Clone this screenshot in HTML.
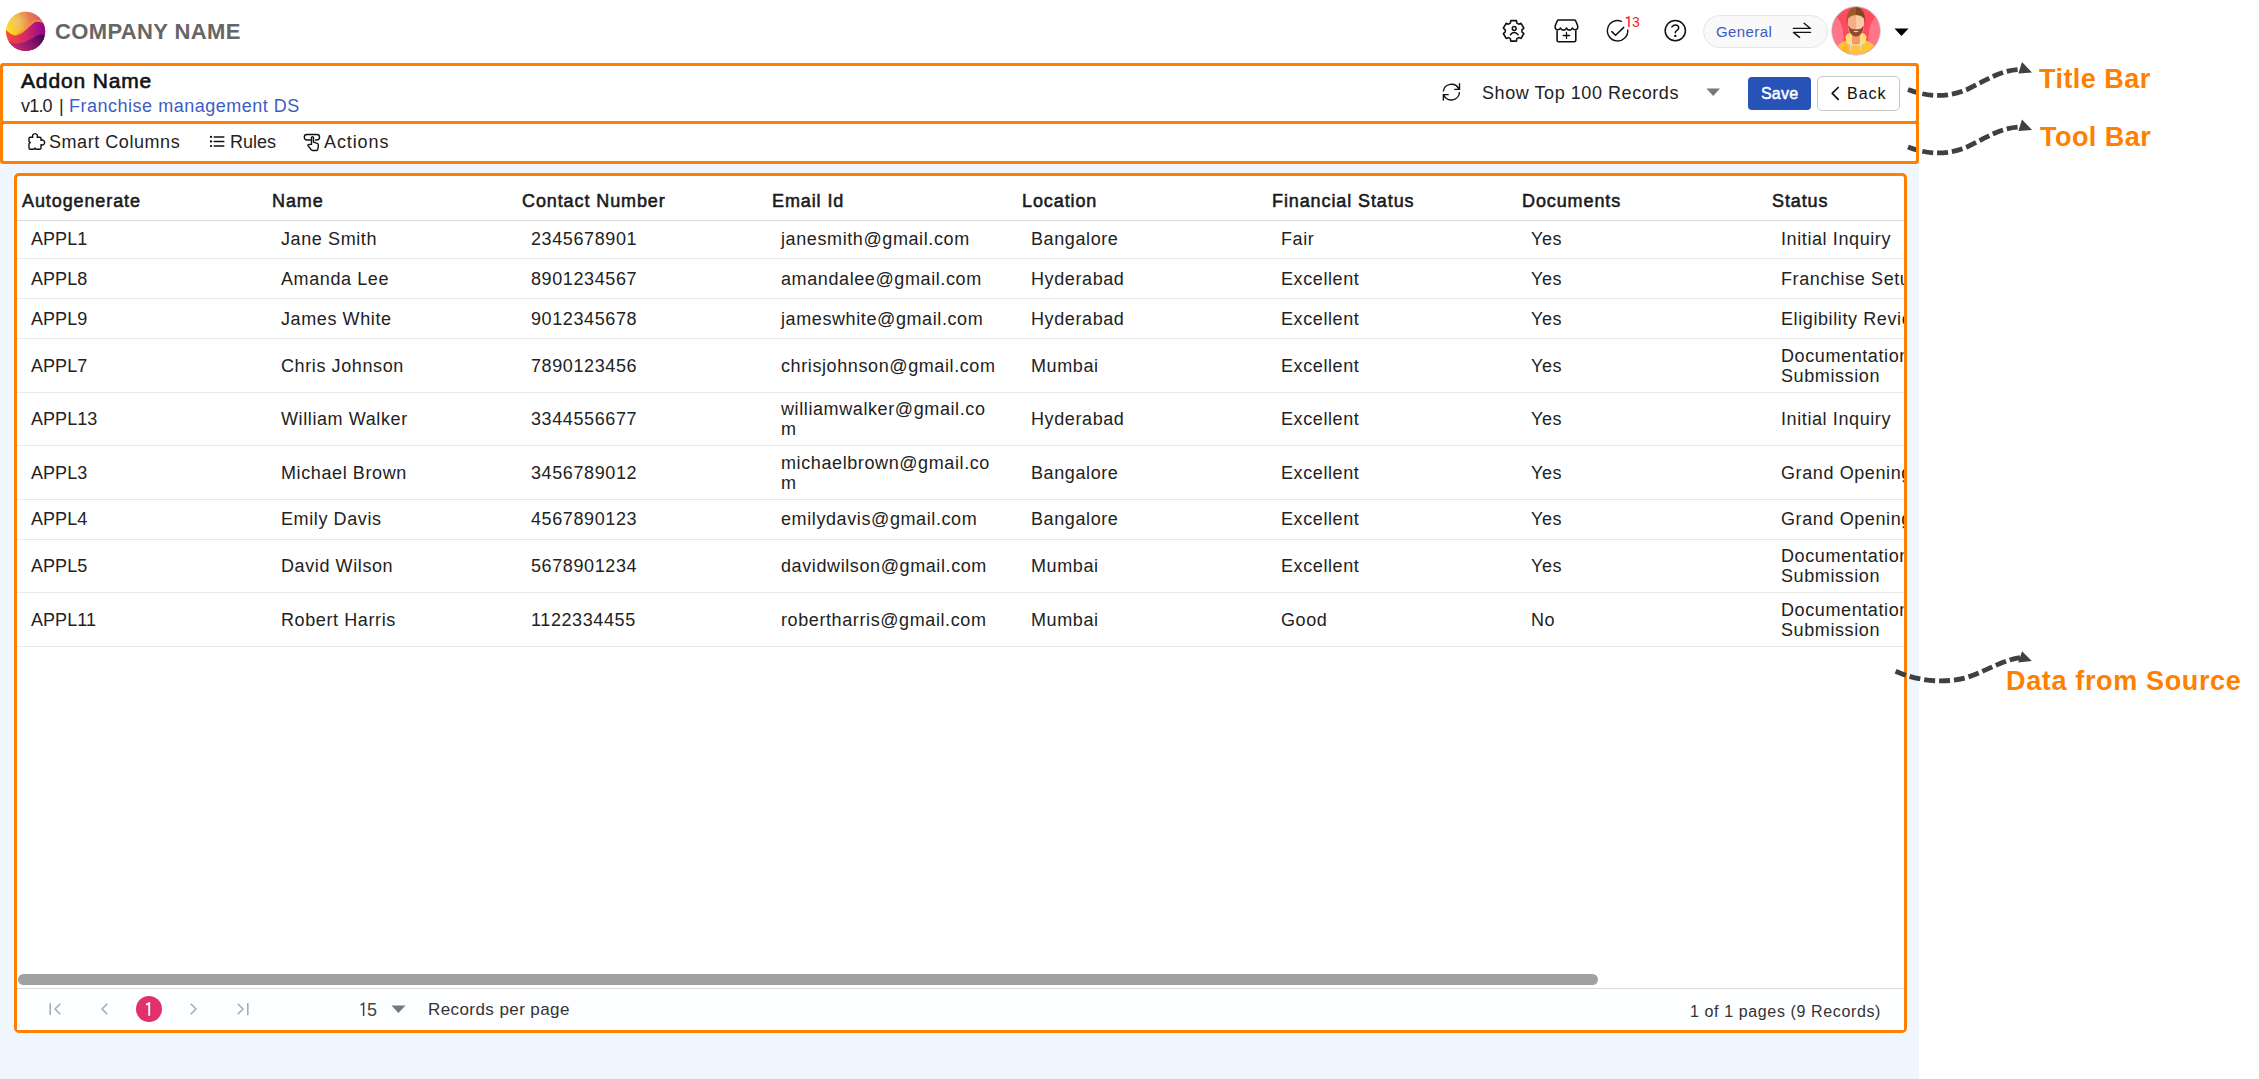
<!DOCTYPE html>
<html><head><meta charset="utf-8"><title>Addon</title>
<style>
*{box-sizing:border-box;margin:0;padding:0}
html,body{width:2259px;height:1079px;overflow:hidden;background:#fff}
body{font-family:"Liberation Sans",sans-serif;color:#222}
#root{position:relative;width:2259px;height:1079px;overflow:hidden}
.t{position:absolute;white-space:nowrap}
.abs{position:absolute}

</style></head><body>
<div id="root">
<div class="abs" style="left:0;top:62px;width:1919px;height:1017px;background:#eff6fd"></div>
<div class="abs" style="left:0;top:0;width:1919px;height:63px;background:#fff"></div>
<svg class="abs" style="left:5px;top:11px" width="41" height="41" viewBox="0 0 41 41">
<defs>
<linearGradient id="lg1" x1="0" y1="0.55" x2="1" y2="0.15"><stop offset="0" stop-color="#fff014"/><stop offset="0.45" stop-color="#eea038"/><stop offset="1" stop-color="#dc3c80"/></linearGradient>
<linearGradient id="lg2" x1="0" y1="0" x2="1" y2="0"><stop offset="0" stop-color="#ff4a3c"/><stop offset="0.5" stop-color="#d42a64"/><stop offset="1" stop-color="#8c0494"/></linearGradient>
<linearGradient id="lg3" x1="0" y1="0.3" x2="1" y2="0"><stop offset="0" stop-color="#cc2e78"/><stop offset="0.55" stop-color="#8a1468"/><stop offset="1" stop-color="#360054"/></linearGradient>
<radialGradient id="hl" cx="0.3" cy="0.25" r="0.3"><stop offset="0" stop-color="#fff" stop-opacity="0.28"/><stop offset="1" stop-color="#fff" stop-opacity="0"/></radialGradient>
<clipPath id="cc"><circle cx="20.6" cy="20.4" r="19.6"/></clipPath>
</defs>
<g clip-path="url(#cc)">
<rect x="0" y="0" width="41" height="41" fill="url(#lg1)"/>
<rect x="0" y="0" width="41" height="41" fill="url(#hl)"/>
<path d="M0 18C4 22 8 25 12 24.3C16 23.5 19 20.5 22 18C25 15 28 11.5 31 10.8C34 10.2 37 11.5 41 13L41 41L0 41Z" fill="url(#lg2)"/>
<path d="M12 23.2C16 22.4 19 19.4 22 16.9C25 13.9 28 10.4 31 9.7C34 9.1 37 10.4 41 11.9" fill="none" stroke="#ff8a38" stroke-width="1.4"/>
<path d="M0 27.5C4 30.5 9 33 13 32.6C18 32 22 30 26 28.2C29 26.5 32 24 35 23.6C37 23.4 39 24.2 41 25L41 41L0 41Z" fill="url(#lg3)"/>
</g></svg>
<div class="t " style="left:55px;top:19px;font-size:22px;line-height:25px;font-weight:700;color:#666;letter-spacing:0.37px;">COMPANY NAME</div>
<svg class="abs" style="left:1501px;top:18px" width="26" height="26" viewBox="0 0 26 26">
<path fill="none" stroke="#111" stroke-width="1.6" stroke-linejoin="round" d="M9.32 5.14 L9.77 2.66 L15.43 2.66 L15.88 5.14 L17.66 6.16 L20.03 5.31 L22.86 10.22 L20.94 11.85 L20.94 13.89 L22.86 15.52 L20.03 20.43 L17.66 19.58 L15.88 20.60 L15.43 23.08 L9.77 23.08 L9.32 20.60 L7.54 19.58 L5.17 20.43 L2.34 15.52 L4.26 13.89 L4.26 11.85 L2.34 10.22 L5.17 5.31 L7.54 6.16Z"/>
<circle cx="13.2" cy="10.5" r="1.9" fill="none" stroke="#111" stroke-width="1.5"/>
<path fill="none" stroke="#111" stroke-width="1.5" stroke-linecap="round" d="M9.3 16.8Q13.2 12.4 17.1 16.8"/>
</svg>
<svg class="abs" style="left:1553px;top:17px" width="27" height="27" viewBox="0 0 27 27">
<path fill="none" stroke="#111" stroke-width="1.6" stroke-linejoin="round" d="M5.6 3H21.3Q22.2 3 22.6 3.8L24.6 8.5C25.2 10.5 24.5 12.8 22.2 12.8C20.8 12.8 19.9 12 19.4 11C18.8 12.3 17.6 13.1 16.3 13.1C15 13.1 14 12.3 13.5 11C13 12.3 11.9 13.1 10.5 13.1C9.1 13.1 8 12.3 7.5 11C7 12 6.1 12.8 4.7 12.8C2.4 12.8 1.7 10.5 2.3 8.5L4.3 3.8Q4.7 3 5.6 3Z"/>
<path fill="none" stroke="#111" stroke-width="1.6" stroke-linejoin="round" d="M4.1 13.4V23.2Q4.1 24.7 5.6 24.7H21.3Q22.8 24.7 22.8 23.2V13.4"/>
<path fill="none" stroke="#111" stroke-width="1.3" stroke-linecap="round" d="M13.5 15.4v6M10.2 18.5h6.5"/>
</svg>
<svg class="abs" style="left:1605px;top:18px" width="26" height="26" viewBox="0 0 26 26">
<path fill="none" stroke="#111" stroke-width="1.4" stroke-linecap="round" d="M16.42 3.29A10.2 10.2 0 1 0 22.78 12.04"/>
<path fill="none" stroke="#111" stroke-width="1.5" stroke-linecap="round" stroke-linejoin="miter" d="M6.8 13.6L10.6 17.2L18.7 9.4"/>
</svg>
<svg class="abs" style="left:1624px;top:15px" width="8" height="14" viewBox="0 0 8 14"><path d="M2 3.2L4.9 2.1V12" fill="none" stroke="#ff1a1a" stroke-width="1.45" stroke-linejoin="miter"/></svg>
<div class="t " style="left:1632px;top:14px;font-size:14px;line-height:16px;color:#ff1a1a;">3</div>
<svg class="abs" style="left:1662px;top:18px" width="26" height="26" viewBox="0 0 26 26">
<circle cx="13.3" cy="12.7" r="10.1" fill="none" stroke="#111" stroke-width="1.5"/>
<path fill="none" stroke="#111" stroke-width="1.5" stroke-linecap="round" d="M9.9 8.9C10.8 7.6 12 7 13.3 7C15.2 7 16.7 8.3 16.7 9.9C16.7 11.3 15.6 12.1 14.7 12.6C13.9 13.1 13.3 13.8 13.3 14.8"/>
<circle cx="13.3" cy="17.9" r="1.2" fill="#111"/>
</svg>
<div class="abs" style="left:1703px;top:15px;width:125px;height:33px;border-radius:17px;background:#f9f9f9;border:1px solid #e6e6e6"></div>
<div class="t " style="left:1716px;top:23px;font-size:15px;line-height:17px;color:#3c5cc4;letter-spacing:0.4px;">General</div>
<svg class="abs" style="left:1791px;top:21px" width="22" height="19" viewBox="0 0 22 19">
<path fill="none" stroke="#111" stroke-width="1.35" stroke-linecap="round" stroke-linejoin="round" d="M2.4 7.4H19.5L13.1 2.2M19.5 11.4H2.4L8.6 16.4"/>
</svg>
<svg class="abs" style="left:1831px;top:6px" width="50" height="50" viewBox="0 0 50 50">
<defs><clipPath id="av"><circle cx="25" cy="24.8" r="23.8"/></clipPath></defs>
<circle cx="25" cy="24.8" r="24.3" fill="#fff" stroke="#c4c4c4" stroke-width="0.9"/>
<g clip-path="url(#av)">
<rect width="50" height="50" fill="#ff4a62"/>
<path d="M0 8C6 10 11 16 12 26L13 40H0Z" fill="#ff7689"/>
<path d="M50 8C44 10 39 16 38 26L37 40H50Z" fill="#ff7689"/>
<path d="M2 50C3 42 8 37 15 34.5H35C42 37 47 42 48 50Z" fill="#ffc23a"/>
<path d="M8 50C9 44 12 40 16 38L19 50Z" fill="#ffb12e"/>
<path d="M14.5 31C15.5 27.5 19 26 25 26S34.5 27.5 35.5 31L34 37C31 39 28 40 25 40S19 39 16 37Z" fill="#ffe173"/>
<path d="M21 27H29V37.5C27.5 39 22.5 39 21 37.5Z" fill="#f29a6e"/>
</g>
<path d="M17 12C17 7 20 4.5 25 4.5S33 7 33 12V20C33 26 29.5 30 25 30S17 26 17 20Z" fill="#ffc9a6"/>
<path d="M17 12C17 7 20 4.5 25 4.5V30C20.5 30 17 26 17 20Z" fill="#f7ae86"/>
<path d="M17.2 19.5C17.5 26 21 30.5 25 30.5S32.5 26 32.8 19.5L31 21.5C29.5 23.5 27.5 23.3 25 23.3S20.5 23.5 19 21.5Z" fill="#8e4a2a"/>
<path d="M22 25.5Q25 24 28 25.5Q25 26.8 22 25.5Z" fill="#ffc9a6"/>
<path d="M15.8 18C15 9 17.5 1.2 25 1.2S35 9 34.2 18L33 13C31 10 28 9 25 9S19 10 17 13Z" fill="#9b5a2e"/>
<path d="M25 1.2C29 1.5 33 5 34 12L31 10C29 9 27 9 25 9Z" fill="#854620"/>
<line x1="19.6" y1="36" x2="19.6" y2="44" stroke="#cfe3f0" stroke-width="1"/>
<line x1="29.8" y1="36" x2="29.8" y2="44" stroke="#cfe3f0" stroke-width="1"/>
</svg>
<svg class="abs" style="left:1894px;top:28px" width="15" height="9" viewBox="0 0 15 9"><path d="M0.5 0.5h14L7.5 8z" fill="#000"/></svg>
<div class="abs" style="left:0;top:63px;width:1919px;height:61px;border:3px solid #ff8000;border-radius:4px;background:#fff"></div>
<div class="abs" style="left:0;top:121px;width:1919px;height:43px;border:3px solid #ff8000;border-radius:4px;background:#fff"></div>
<div class="t " style="left:21px;top:69px;font-size:21px;line-height:23px;color:#111;letter-spacing:0.85px;-webkit-text-stroke:0.6px #111;">Addon Name</div>
<div class="t " style="left:21px;top:96px;font-size:18px;line-height:20px;color:#222;letter-spacing:-0.8px;">v1.0</div>
<div class="t " style="left:59px;top:96px;font-size:18px;line-height:20px;color:#222;">|</div>
<div class="t " style="left:69px;top:96px;font-size:18px;line-height:20px;color:#3d5cc5;letter-spacing:0.51px;">Franchise management DS</div>
<svg class="abs" style="left:1441px;top:82px" width="21" height="21" viewBox="0 0 21 21">
<path fill="none" stroke="#111" stroke-width="1.4" stroke-linecap="butt" stroke-linejoin="miter" d="M2.3 9.5A8.2 8.2 0 0 1 17.8 6.9M18.5 1.2V7.4H13.2M18.5 10.1A8.2 8.2 0 0 1 2.8 13.1M7.7 12.6H2.4V18.6"/>
</svg>
<div class="t " style="left:1482px;top:83px;font-size:18px;line-height:20px;color:#222;letter-spacing:0.56px;">Show Top 100 Records</div>
<svg class="abs" style="left:1706px;top:88px" width="15" height="9" viewBox="0 0 15 9"><path d="M0.5 0.5h13.5L7.2 8z" fill="#777"/></svg>
<div class="abs" style="left:1748px;top:77px;width:63px;height:33px;border-radius:4px;background:#2752b8"></div>
<div class="t " style="left:1761px;top:85px;font-size:16px;line-height:17px;color:#fff;letter-spacing:0.2px;-webkit-text-stroke:0.45px #fff;">Save</div>
<div class="abs" style="left:1817px;top:76px;width:83px;height:35px;border-radius:5px;background:#fff;border:1px solid #c9c9c9"></div>
<svg class="abs" style="left:1830px;top:86px" width="11" height="15" viewBox="0 0 11 15"><path fill="none" stroke="#111" stroke-width="1.7" stroke-linecap="round" stroke-linejoin="round" d="M8.2 1.5L2.2 7.3l6 6"/></svg>
<div class="t " style="left:1847px;top:85px;font-size:16px;line-height:17px;color:#111;letter-spacing:1.0px;">Back</div>
<svg class="abs" style="left:27px;top:132px" width="20" height="20" viewBox="0 0 20 20">
<path fill="none" stroke="#111" stroke-width="1.4" stroke-linejoin="round" d="M2 6.5A1.2 1.2 0 0 1 3.2 5.3H5.8A2.5 2.5 0 1 1 10.2 5.3H12.8A1.2 1.2 0 0 1 14 6.5V8.3A2.5 2.5 0 1 1 14 12.7V16.1A1.2 1.2 0 0 1 12.8 17.3H9L8 16.1L7 17.3H3.2A1.2 1.2 0 0 1 2 16.1V11.8L3.3 10.6L2 9.4Z"/>
</svg>
<div class="t " style="left:49px;top:132px;font-size:18px;line-height:20px;color:#222;letter-spacing:0.55px;">Smart Columns</div>
<svg class="abs" style="left:208px;top:134px" width="18" height="16" viewBox="0 0 18 16">
<path fill="none" stroke="#111" stroke-width="1.5" stroke-linecap="round" d="M6.2 2.9h9.6M6.2 7.5h9.6M6.2 12.1h9.6"/>
<circle cx="3" cy="2.9" r="1.15" fill="#111"/><circle cx="3" cy="7.5" r="1.15" fill="#111"/><circle cx="3" cy="12.1" r="1.15" fill="#111"/>
</svg>
<div class="t " style="left:230px;top:132px;font-size:18px;line-height:20px;color:#222;">Rules</div>
<svg class="abs" style="left:302px;top:132px" width="20" height="20" viewBox="0 0 20 20">
<path fill="none" stroke="#111" stroke-width="1.4" stroke-linecap="round" stroke-linejoin="round" d="M8.4 8H5A2.75 2.75 0 0 1 5 2.5H14.8A2.75 2.75 0 0 1 14.8 8H13.6"/>
<path fill="none" stroke="#111" stroke-width="1.4" stroke-linecap="round" stroke-linejoin="round" d="M9.5 12.4V5.6A1 1 0 0 1 11.5 5.6V10.2L15.2 11.3C16.1 11.6 16.5 12.3 16.4 13.2L15.9 16.9C15.8 17.8 15.1 18.5 14.2 18.5H10.6C10 18.5 9.5 18.2 9.2 17.7L6 13.6C5.6 12.9 6.4 12.1 7.1 12.5Z"/>
</svg>
<div class="t " style="left:324px;top:132px;font-size:18px;line-height:20px;color:#222;letter-spacing:0.9px;">Actions</div>
<div class="abs" style="left:14px;top:173px;width:1893px;height:860px;border:3px solid #ff8000;border-radius:5px;background:#fff"></div>
<div class="abs" style="left:17px;top:176px;width:1887px;height:811px;overflow:hidden">
<div class="t " style="left:5px;top:15px;font-size:18px;line-height:20px;color:#1a1a1a;letter-spacing:0.9px;-webkit-text-stroke:0.55px #1a1a1a;">Autogenerate</div>
<div class="t " style="left:255px;top:15px;font-size:18px;line-height:20px;color:#1a1a1a;letter-spacing:0.9px;-webkit-text-stroke:0.55px #1a1a1a;">Name</div>
<div class="t " style="left:505px;top:15px;font-size:18px;line-height:20px;color:#1a1a1a;letter-spacing:0.9px;-webkit-text-stroke:0.55px #1a1a1a;">Contact Number</div>
<div class="t " style="left:755px;top:15px;font-size:18px;line-height:20px;color:#1a1a1a;letter-spacing:0.9px;-webkit-text-stroke:0.55px #1a1a1a;">Email Id</div>
<div class="t " style="left:1005px;top:15px;font-size:18px;line-height:20px;color:#1a1a1a;letter-spacing:0.9px;-webkit-text-stroke:0.55px #1a1a1a;">Location</div>
<div class="t " style="left:1255px;top:15px;font-size:18px;line-height:20px;color:#1a1a1a;letter-spacing:0.9px;-webkit-text-stroke:0.55px #1a1a1a;">Financial Status</div>
<div class="t " style="left:1505px;top:15px;font-size:18px;line-height:20px;color:#1a1a1a;letter-spacing:0.9px;-webkit-text-stroke:0.55px #1a1a1a;">Documents</div>
<div class="t " style="left:1755px;top:15px;font-size:18px;line-height:20px;color:#1a1a1a;letter-spacing:0.9px;-webkit-text-stroke:0.55px #1a1a1a;">Status</div>
<div class="abs" style="left:0;top:44px;width:1887px;height:1px;background:#dcdcdc"></div>
<div class="t " style="left:14px;top:53px;font-size:18px;line-height:20px;color:#222;letter-spacing:0.05px;">APPL1</div>
<div class="t " style="left:264px;top:53px;font-size:18px;line-height:20px;color:#222;letter-spacing:0.6px;">Jane Smith</div>
<div class="t " style="left:514px;top:53px;font-size:18px;line-height:20px;color:#222;letter-spacing:0.6px;">2345678901</div>
<div class="t " style="left:764px;top:53px;font-size:18px;line-height:20px;color:#222;letter-spacing:0.6px;">janesmith@gmail.com</div>
<div class="t " style="left:1014px;top:53px;font-size:18px;line-height:20px;color:#222;letter-spacing:0.6px;">Bangalore</div>
<div class="t " style="left:1264px;top:53px;font-size:18px;line-height:20px;color:#222;letter-spacing:0.6px;">Fair</div>
<div class="t " style="left:1514px;top:53px;font-size:18px;line-height:20px;color:#222;letter-spacing:0.6px;">Yes</div>
<div class="t " style="left:1764px;top:53px;font-size:18px;line-height:20px;color:#222;letter-spacing:0.6px;">Initial Inquiry</div>
<div class="abs" style="left:0;top:82px;width:1887px;height:1px;background:#e9e9e9"></div>
<div class="t " style="left:14px;top:93px;font-size:18px;line-height:20px;color:#222;letter-spacing:0.05px;">APPL8</div>
<div class="t " style="left:264px;top:93px;font-size:18px;line-height:20px;color:#222;letter-spacing:0.6px;">Amanda Lee</div>
<div class="t " style="left:514px;top:93px;font-size:18px;line-height:20px;color:#222;letter-spacing:0.6px;">8901234567</div>
<div class="t " style="left:764px;top:93px;font-size:18px;line-height:20px;color:#222;letter-spacing:0.6px;">amandalee@gmail.com</div>
<div class="t " style="left:1014px;top:93px;font-size:18px;line-height:20px;color:#222;letter-spacing:0.6px;">Hyderabad</div>
<div class="t " style="left:1264px;top:93px;font-size:18px;line-height:20px;color:#222;letter-spacing:0.6px;">Excellent</div>
<div class="t " style="left:1514px;top:93px;font-size:18px;line-height:20px;color:#222;letter-spacing:0.6px;">Yes</div>
<div class="t " style="left:1764px;top:93px;font-size:18px;line-height:20px;color:#222;letter-spacing:0.6px;">Franchise Setup</div>
<div class="abs" style="left:0;top:122px;width:1887px;height:1px;background:#e9e9e9"></div>
<div class="t " style="left:14px;top:133px;font-size:18px;line-height:20px;color:#222;letter-spacing:0.05px;">APPL9</div>
<div class="t " style="left:264px;top:133px;font-size:18px;line-height:20px;color:#222;letter-spacing:0.6px;">James White</div>
<div class="t " style="left:514px;top:133px;font-size:18px;line-height:20px;color:#222;letter-spacing:0.6px;">9012345678</div>
<div class="t " style="left:764px;top:133px;font-size:18px;line-height:20px;color:#222;letter-spacing:0.6px;">jameswhite@gmail.com</div>
<div class="t " style="left:1014px;top:133px;font-size:18px;line-height:20px;color:#222;letter-spacing:0.6px;">Hyderabad</div>
<div class="t " style="left:1264px;top:133px;font-size:18px;line-height:20px;color:#222;letter-spacing:0.6px;">Excellent</div>
<div class="t " style="left:1514px;top:133px;font-size:18px;line-height:20px;color:#222;letter-spacing:0.6px;">Yes</div>
<div class="t " style="left:1764px;top:133px;font-size:18px;line-height:20px;color:#222;letter-spacing:0.6px;">Eligibility Review</div>
<div class="abs" style="left:0;top:162px;width:1887px;height:1px;background:#e9e9e9"></div>
<div class="t " style="left:14px;top:180px;font-size:18px;line-height:20px;color:#222;letter-spacing:0.05px;">APPL7</div>
<div class="t " style="left:264px;top:180px;font-size:18px;line-height:20px;color:#222;letter-spacing:0.6px;">Chris Johnson</div>
<div class="t " style="left:514px;top:180px;font-size:18px;line-height:20px;color:#222;letter-spacing:0.6px;">7890123456</div>
<div class="t " style="left:764px;top:180px;font-size:18px;line-height:20px;color:#222;letter-spacing:0.6px;">chrisjohnson@gmail.com</div>
<div class="t " style="left:1014px;top:180px;font-size:18px;line-height:20px;color:#222;letter-spacing:0.6px;">Mumbai</div>
<div class="t " style="left:1264px;top:180px;font-size:18px;line-height:20px;color:#222;letter-spacing:0.6px;">Excellent</div>
<div class="t " style="left:1514px;top:180px;font-size:18px;line-height:20px;color:#222;letter-spacing:0.6px;">Yes</div>
<div class="t " style="left:1764px;top:170px;font-size:18px;line-height:20px;color:#222;letter-spacing:0.6px;line-height:20px;">Documentation<br>Submission</div>
<div class="abs" style="left:0;top:216px;width:1887px;height:1px;background:#e9e9e9"></div>
<div class="t " style="left:14px;top:233px;font-size:18px;line-height:20px;color:#222;letter-spacing:0.05px;">APPL13</div>
<div class="t " style="left:264px;top:233px;font-size:18px;line-height:20px;color:#222;letter-spacing:0.6px;">William Walker</div>
<div class="t " style="left:514px;top:233px;font-size:18px;line-height:20px;color:#222;letter-spacing:0.6px;">3344556677</div>
<div class="t " style="left:764px;top:223px;font-size:18px;line-height:20px;color:#222;letter-spacing:0.6px;line-height:20px;">williamwalker@gmail.co<br>m</div>
<div class="t " style="left:1014px;top:233px;font-size:18px;line-height:20px;color:#222;letter-spacing:0.6px;">Hyderabad</div>
<div class="t " style="left:1264px;top:233px;font-size:18px;line-height:20px;color:#222;letter-spacing:0.6px;">Excellent</div>
<div class="t " style="left:1514px;top:233px;font-size:18px;line-height:20px;color:#222;letter-spacing:0.6px;">Yes</div>
<div class="t " style="left:1764px;top:233px;font-size:18px;line-height:20px;color:#222;letter-spacing:0.6px;">Initial Inquiry</div>
<div class="abs" style="left:0;top:269px;width:1887px;height:1px;background:#e9e9e9"></div>
<div class="t " style="left:14px;top:287px;font-size:18px;line-height:20px;color:#222;letter-spacing:0.05px;">APPL3</div>
<div class="t " style="left:264px;top:287px;font-size:18px;line-height:20px;color:#222;letter-spacing:0.6px;">Michael Brown</div>
<div class="t " style="left:514px;top:287px;font-size:18px;line-height:20px;color:#222;letter-spacing:0.6px;">3456789012</div>
<div class="t " style="left:764px;top:277px;font-size:18px;line-height:20px;color:#222;letter-spacing:0.6px;line-height:20px;">michaelbrown@gmail.co<br>m</div>
<div class="t " style="left:1014px;top:287px;font-size:18px;line-height:20px;color:#222;letter-spacing:0.6px;">Bangalore</div>
<div class="t " style="left:1264px;top:287px;font-size:18px;line-height:20px;color:#222;letter-spacing:0.6px;">Excellent</div>
<div class="t " style="left:1514px;top:287px;font-size:18px;line-height:20px;color:#222;letter-spacing:0.6px;">Yes</div>
<div class="t " style="left:1764px;top:287px;font-size:18px;line-height:20px;color:#222;letter-spacing:0.6px;">Grand Opening</div>
<div class="abs" style="left:0;top:323px;width:1887px;height:1px;background:#e9e9e9"></div>
<div class="t " style="left:14px;top:333px;font-size:18px;line-height:20px;color:#222;letter-spacing:0.05px;">APPL4</div>
<div class="t " style="left:264px;top:333px;font-size:18px;line-height:20px;color:#222;letter-spacing:0.6px;">Emily Davis</div>
<div class="t " style="left:514px;top:333px;font-size:18px;line-height:20px;color:#222;letter-spacing:0.6px;">4567890123</div>
<div class="t " style="left:764px;top:333px;font-size:18px;line-height:20px;color:#222;letter-spacing:0.6px;">emilydavis@gmail.com</div>
<div class="t " style="left:1014px;top:333px;font-size:18px;line-height:20px;color:#222;letter-spacing:0.6px;">Bangalore</div>
<div class="t " style="left:1264px;top:333px;font-size:18px;line-height:20px;color:#222;letter-spacing:0.6px;">Excellent</div>
<div class="t " style="left:1514px;top:333px;font-size:18px;line-height:20px;color:#222;letter-spacing:0.6px;">Yes</div>
<div class="t " style="left:1764px;top:333px;font-size:18px;line-height:20px;color:#222;letter-spacing:0.6px;">Grand Opening</div>
<div class="abs" style="left:0;top:363px;width:1887px;height:1px;background:#e9e9e9"></div>
<div class="t " style="left:14px;top:380px;font-size:18px;line-height:20px;color:#222;letter-spacing:0.05px;">APPL5</div>
<div class="t " style="left:264px;top:380px;font-size:18px;line-height:20px;color:#222;letter-spacing:0.6px;">David Wilson</div>
<div class="t " style="left:514px;top:380px;font-size:18px;line-height:20px;color:#222;letter-spacing:0.6px;">5678901234</div>
<div class="t " style="left:764px;top:380px;font-size:18px;line-height:20px;color:#222;letter-spacing:0.6px;">davidwilson@gmail.com</div>
<div class="t " style="left:1014px;top:380px;font-size:18px;line-height:20px;color:#222;letter-spacing:0.6px;">Mumbai</div>
<div class="t " style="left:1264px;top:380px;font-size:18px;line-height:20px;color:#222;letter-spacing:0.6px;">Excellent</div>
<div class="t " style="left:1514px;top:380px;font-size:18px;line-height:20px;color:#222;letter-spacing:0.6px;">Yes</div>
<div class="t " style="left:1764px;top:370px;font-size:18px;line-height:20px;color:#222;letter-spacing:0.6px;line-height:20px;">Documentation<br>Submission</div>
<div class="abs" style="left:0;top:416px;width:1887px;height:1px;background:#e9e9e9"></div>
<div class="t " style="left:14px;top:434px;font-size:18px;line-height:20px;color:#222;letter-spacing:0.05px;">APPL11</div>
<div class="t " style="left:264px;top:434px;font-size:18px;line-height:20px;color:#222;letter-spacing:0.6px;">Robert Harris</div>
<div class="t " style="left:514px;top:434px;font-size:18px;line-height:20px;color:#222;letter-spacing:0.6px;">1122334455</div>
<div class="t " style="left:764px;top:434px;font-size:18px;line-height:20px;color:#222;letter-spacing:0.6px;">robertharris@gmail.com</div>
<div class="t " style="left:1014px;top:434px;font-size:18px;line-height:20px;color:#222;letter-spacing:0.6px;">Mumbai</div>
<div class="t " style="left:1264px;top:434px;font-size:18px;line-height:20px;color:#222;letter-spacing:0.6px;">Good</div>
<div class="t " style="left:1514px;top:434px;font-size:18px;line-height:20px;color:#222;letter-spacing:0.6px;">No</div>
<div class="t " style="left:1764px;top:424px;font-size:18px;line-height:20px;color:#222;letter-spacing:0.6px;line-height:20px;">Documentation<br>Submission</div>
<div class="abs" style="left:0;top:470px;width:1887px;height:1px;background:#e9e9e9"></div>
</div>
<div class="abs" style="left:18px;top:974px;width:1580px;height:11px;border-radius:6px;background:#a1a1a1"></div>
<div class="abs" style="left:17px;top:988px;width:1887px;height:1px;background:#dadada"></div>
<div class="abs" style="left:17px;top:989px;width:1887px;height:41px;background:#fdfeff"></div>
<svg class="abs" style="left:48px;top:1002px" width="14" height="14" viewBox="0 0 14 14"><path fill="none" stroke="#aaa" stroke-width="1.6" stroke-linecap="round" stroke-linejoin="round" d="M2.2 1.8v10.6M11.8 2.2L7 7l4.8 4.8"/></svg>
<svg class="abs" style="left:99px;top:1002px" width="10" height="14" viewBox="0 0 10 14"><path fill="none" stroke="#aaa" stroke-width="1.6" stroke-linecap="round" stroke-linejoin="round" d="M7.8 2.2L3 7l4.8 4.8"/></svg>
<div class="abs" style="left:136px;top:996px;width:26px;height:26px;border-radius:13px;background:#e2306c"></div>
<svg class="abs" style="left:142px;top:1001px" width="12" height="16" viewBox="0 0 12 16"><path d="M4.2 3.6L7.2 2.3V14.8" fill="none" stroke="#fff" stroke-width="1.9" stroke-linejoin="miter"/></svg>
<svg class="abs" style="left:189px;top:1002px" width="10" height="14" viewBox="0 0 10 14"><path fill="none" stroke="#aaa" stroke-width="1.6" stroke-linecap="round" stroke-linejoin="round" d="M2.2 2.2L7 7l-4.8 4.8"/></svg>
<svg class="abs" style="left:236px;top:1002px" width="14" height="14" viewBox="0 0 14 14"><path fill="none" stroke="#aaa" stroke-width="1.6" stroke-linecap="round" stroke-linejoin="round" d="M11.8 1.8v10.6M2.2 2.2L7 7l-4.8 4.8"/></svg>
<svg class="abs" style="left:358px;top:1001px" width="9" height="16" viewBox="0 0 9 16"><path d="M2.6 4.1L5.6 2.3V15" fill="none" stroke="#444" stroke-width="1.5"/></svg>
<div class="t " style="left:367px;top:1000px;font-size:18px;line-height:20px;color:#444;">5</div>
<svg class="abs" style="left:391px;top:1005px" width="15" height="9" viewBox="0 0 15 9"><path d="M0.5 0.5h14L7.5 8z" fill="#777"/></svg>
<div class="t " style="left:428px;top:1000px;font-size:17px;line-height:19px;color:#333;letter-spacing:0.42px;">Records per page</div>
<div class="t " style="left:1690px;top:1003px;font-size:16px;line-height:17px;color:#333;letter-spacing:0.62px;">1 of 1 pages (9 Records)</div>
<svg class="abs" style="left:0;top:0" width="2259" height="1079" viewBox="0 0 2259 1079"><path fill="none" stroke="#404040" stroke-width="4.8" stroke-dasharray="11 3.9" d="M1908 89.5C1930 98 1950 97 1968 89C1985 81 2000 70 2020 69.5"/><path d="M2022 62L2032 72.4L2018.4 73.6Z" fill="#404040"/><path fill="none" stroke="#404040" stroke-width="4.8" stroke-dasharray="11 3.9" d="M1908 147C1930 155.5 1950 154.5 1968 146.5C1985 138.5 2000 127.5 2020 127"/><path d="M2022 119.5L2032 129.9L2018.4 131.1Z" fill="#404040"/><path fill="none" stroke="#404040" stroke-width="4.8" stroke-dasharray="11 3.9" d="M1895.6 671.2C1920 682 1945 683 1965 678C1985 672 2000 661 2020 657.6"/><path d="M2022.1 651.3L2031.8 660.9L2018.2 662.6Z" fill="#404040"/></svg>
<div class="abs" style="left:0;top:63px;width:1919px;height:61px;border:3px solid #ff8000;border-radius:4px"></div>
<div class="abs" style="left:0;top:121px;width:1919px;height:43px;border:3px solid #ff8000;border-radius:4px"></div>
<div class="t " style="left:2039px;top:64px;font-size:27px;line-height:30px;font-weight:700;color:#ff8000;letter-spacing:0.45px;">Title Bar</div>
<div class="t " style="left:2040px;top:122px;font-size:27px;line-height:30px;font-weight:700;color:#ff8000;letter-spacing:0.45px;">Tool Bar</div>
<div class="t " style="left:2006px;top:666px;font-size:27px;line-height:30px;font-weight:700;color:#ff8000;letter-spacing:0.65px;">Data from Source</div>
</div>
</body></html>
